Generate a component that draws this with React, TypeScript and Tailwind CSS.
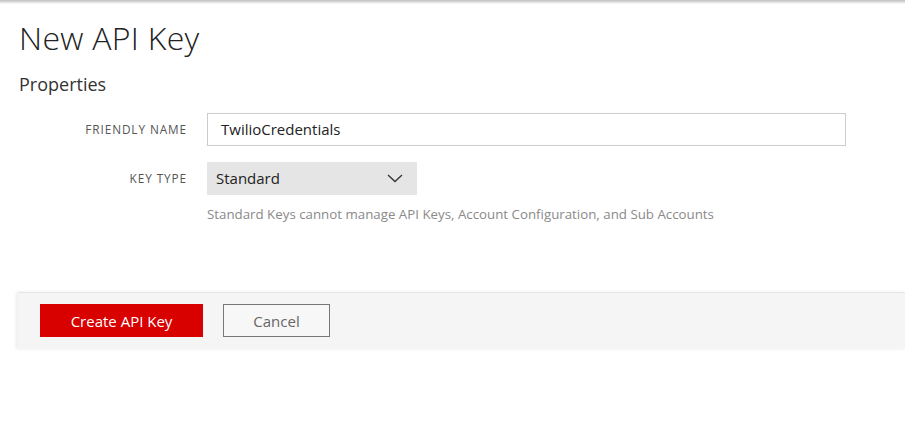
import React from 'react';

const font = { fontFamily: '"Open Sans", "Noto Sans", sans-serif' };

const NewApiKey = () => {
  return (
    <div className="min-h-screen w-[905px] h-[426px] bg-white relative overflow-hidden" style={font}>
      <div className="h-[4px] bg-gradient-to-b from-[#bdbdbd] to-white" />
      <div className="pl-[19px] pt-[13px]">
        <h1 className="text-[32px] font-light leading-[42px] text-[#222] tracking-[0.3px]">New API Key</h1>
        <h2 className="mt-[13px] text-[18px] leading-[24px] text-[#333]">Properties</h2>
      </div>

      <div className="mt-[17px] flex flex-col">
        <div className="flex items-center h-[33px]">
          <label className="w-[187px] text-right text-[11.8px] tracking-[0.9px] text-[#555] uppercase">Friendly Name</label>
          <div className="ml-[20px] w-[639px] h-[33px] border border-[#cccccc] flex items-center px-[13px] text-[15px] text-[#222]">
            TwilioCredentials
          </div>
        </div>
        <div className="flex items-center h-[33px] mt-[16px]">
          <label className="w-[187px] text-right text-[11.8px] tracking-[0.9px] text-[#555] uppercase">Key Type</label>
          <div className="ml-[20px] w-[210px] h-[33px] bg-[#e5e5e5] flex items-center justify-between pl-[9px] pr-[14px] text-[15px] text-[#222]">
            <span>Standard</span>
            <svg width="16" height="9" viewBox="0 0 16 9" fill="none" stroke="#333" strokeWidth="1.3">
              <path d="M1 1l7 6.5L15 1" />
            </svg>
          </div>
        </div>
        <p className="ml-[207px] mt-[10px] text-[13.3px] text-[#8a8a8a]">
          Standard Keys cannot manage API Keys, Account Configuration, and Sub Accounts
        </p>
      </div>

      <div className="ml-[18px] mt-[67px] h-[57px] bg-[#f5f5f5] border-t border-[#e6e6e6] shadow-[-2px_0_3px_rgba(0,0,0,0.08)] flex items-center gap-[20px] pl-[22px]">
        <button className="w-[163px] h-[33px] bg-[#d90000] text-white text-[15px]">Create API Key</button>
        <button className="w-[107px] h-[33px] border border-[#777] bg-[#f7f7f7] text-[#666] text-[15px]">Cancel</button>
      </div>
    </div>
  );
};

export default function App() {
  return <NewApiKey />;
}
